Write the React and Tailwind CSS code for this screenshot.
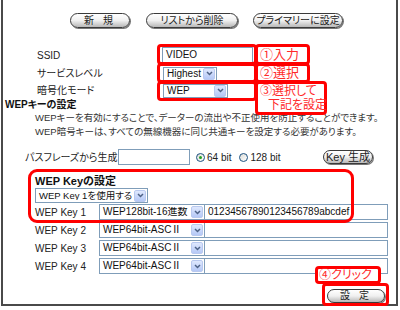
import React from 'react';

const jp = "font-['Liberation_Sans','Noto_Sans_CJK_JP',sans-serif]";

// pill shaped gray button of the router page
const PillButton = ({ label, className }) => (
  <div
    className={`flex items-center justify-center rounded-full border border-[#3a3a3a] bg-gradient-to-b from-white via-[#f0f0f0] to-[#b8b8b8] shadow-[1px_1px_0_#777] text-[10px] text-[#222] leading-none ${className}`}
  >
    {label}
  </div>
);

const SelectBox = ({ value, className, textClass = 'text-[10px]' }) => (
  <div className={`flex items-center border border-[#7f9db9] bg-white ${className}`}>
    <span className={`flex-1 pl-[3px] leading-none text-[#111] whitespace-nowrap overflow-hidden ${textClass}`}>{value}</span>
    <span className="mr-[1px] flex h-[12px] w-[12px] shrink-0 items-center justify-center rounded-[2px] border border-[#b9c9ef] bg-gradient-to-b from-[#dfe8fd] to-[#b5c8f6]">
      <svg width="7" height="5" viewBox="0 0 7 5">
        <path d="M1 1 L3.5 3.5 L6 1" fill="none" stroke="#4d6185" strokeWidth="1.5" />
      </svg>
    </span>
  </div>
);

const TextBox = ({ value, className }) => (
  <div className={`flex items-center border border-[#7f9db9] bg-white pl-[3px] text-[10px] leading-none text-[#111] ${className}`}>
    {value}
  </div>
);

const Radio = ({ checked }) => (
  <span className="flex h-[9px] w-[9px] items-center justify-center rounded-full border border-[#1c5180] bg-gradient-to-br from-[#dcdcd7] to-white">
    {checked && <span className="h-[3px] w-[3px] rounded-full bg-[#21a121]" />}
  </span>
);

const keyRows = [
  { label: 'WEP Key 1', type: 'WEP128bit-16進数', key: '01234567890123456789abcdef' },
  { label: 'WEP Key 2', type: 'WEP64bit-ASCⅡ', key: '' },
  { label: 'WEP Key 3', type: 'WEP64bit-ASCⅡ', key: '' },
  { label: 'WEP Key 4', type: 'WEP64bit-ASCⅡ', key: '' },
];

const Note = ({ className, children }) => (
  <div
    className={`absolute whitespace-nowrap rounded-[4px] border-[3px] border-[#ff0000] bg-white text-[#ff2a2a] ${className}`}
  >
    {children}
  </div>
);

export default function App() {
  return (
    <div className={`relative h-[310px] w-[400px] overflow-hidden bg-white pl-[1px] ${jp} [font-feature-settings:'palt']`}>
      <div className="flex h-[306px] w-[397px] flex-col border-x-2 border-b-2 border-[#4a4a4a] text-[#222]">
        {/* top buttons */}
        <div className="mt-[13px] flex h-[15px] pl-[67px]">
          <PillButton label="新 規" className="w-[60px] tracking-[3px]" />
          <PillButton label="リストから削除" className="ml-[16px] w-[92px]" />
          <PillButton label="プライマリーに設定" className="ml-[15px] w-[90px]" />
        </div>

        {/* basic settings */}
        <div className="mt-[19px] flex h-[16px] items-center pl-[34px] text-[10px]">
          <span className="w-[125px]">SSID</span>
          <TextBox value="VIDEO" className="h-[16px] w-[91px]" />
        </div>
        <div className="mt-[3px] flex h-[15px] items-center pl-[34px] text-[10px]">
          <span className="w-[126px]">サービスレベル</span>
          <SelectBox value="Highest" className="h-[14px] w-[54px]" />
        </div>
        <div className="mt-[2px] flex h-[15px] items-center pl-[34px] text-[10px]">
          <span className="w-[126px]">暗号化モード</span>
          <SelectBox value="WEP" className="h-[14px] w-[65px]" />
        </div>

        {/* WEP key section */}
        <div className="h-[13px] pl-[2px] text-[10px] font-bold leading-[13px] text-[#111]">WEPキーの設定</div>
        <div className="pl-[32px] text-[9.5px] leading-[14px] text-[#333]">
          <p>WEPキーを有効にすることで、データーの流出や不正使用を防止することができます。</p>
          <p>WEP暗号キーは、すべての無線機器に同じ共通キーを設定する必要があります。</p>
        </div>

        <div className="mt-[10px] flex h-[16px] items-center pl-[22px] text-[10px]">
          <span className="w-[93px]">パスフレーズから生成</span>
          <TextBox value="" className="h-[16px] w-[72px]" />
          <span className="ml-[6px] flex items-center gap-[2px]">
            <Radio checked />
            <span>64 bit</span>
          </span>
          <span className="ml-[8px] flex items-center gap-[2px]">
            <Radio />
            <span>128 bit</span>
          </span>
          <PillButton label="Key 生成" className="ml-auto mr-[23px] h-[14px] w-[50px] text-[11px]" />
        </div>

        <div className="mt-[9px] h-[14px] pl-[32px] text-[11px] font-bold leading-[14px] text-[#111]">WEP Keyの設定</div>
        <div className="pl-[32px]">
          <SelectBox value="WEP Key 1を使用する" className="h-[15px] w-[113px]" textClass="text-[9.5px]" />
        </div>
        <div className="mt-[1px] flex flex-col gap-[2px] pl-[32px]">
          {keyRows.map((row) => (
            <div key={row.label} className="flex h-[16px] items-center text-[10px]">
              <span className="w-[64px]">{row.label}</span>
              <SelectBox value={row.type} className="h-[16px] w-[106px]" />
              <TextBox value={row.key} className="h-[16px] w-[183px] border-l-0" />
            </div>
          ))}
        </div>

        <div className="mt-[15px] flex">
          <PillButton label="設 定" className="ml-auto mr-[11px] h-[14px] w-[58px] tracking-[3px]" />
        </div>
      </div>

      {/* red annotations */}
      <div className="absolute left-[157px] top-[44px] h-[21px] w-[100px] rounded-[4px] border-[3px] border-[#ff0000]" />
      <div className="absolute left-[157px] top-[63px] h-[20px] w-[100px] rounded-[4px] border-[3px] border-[#ff0000]" />
      <div className="absolute left-[157px] top-[81px] h-[20px] w-[100px] rounded-[4px] border-[3px] border-[#ff0000]" />
      <Note className="left-[255px] top-[44px] h-[21px] w-[55px] pl-[2px] text-[13px] leading-[15px]">①入力</Note>
      <Note className="left-[255px] top-[63px] h-[20px] w-[55px] pl-[2px] text-[13px] leading-[14px]">②選択</Note>
      <Note className="left-[255px] top-[81px] h-[34px] w-[72px] pl-[2px] text-[12px] leading-[14px]">
        <div>③選択して</div>
        <div className="pl-[8px]">下記を設定</div>
      </Note>
      <div className="absolute left-[28px] top-[169px] h-[54px] w-[326px] rounded-[9px] border-[3px] border-[#ff0000]" />
      <Note className="left-[315px] top-[266px] h-[18px] w-[66px] pl-[1px] text-[12px] leading-[12px]">④クリック</Note>
      <div className="absolute left-[322px] top-[283px] h-[23px] w-[67px] rounded-[4px] border-[3px] border-[#ff0000]" />
    </div>
  );
}
